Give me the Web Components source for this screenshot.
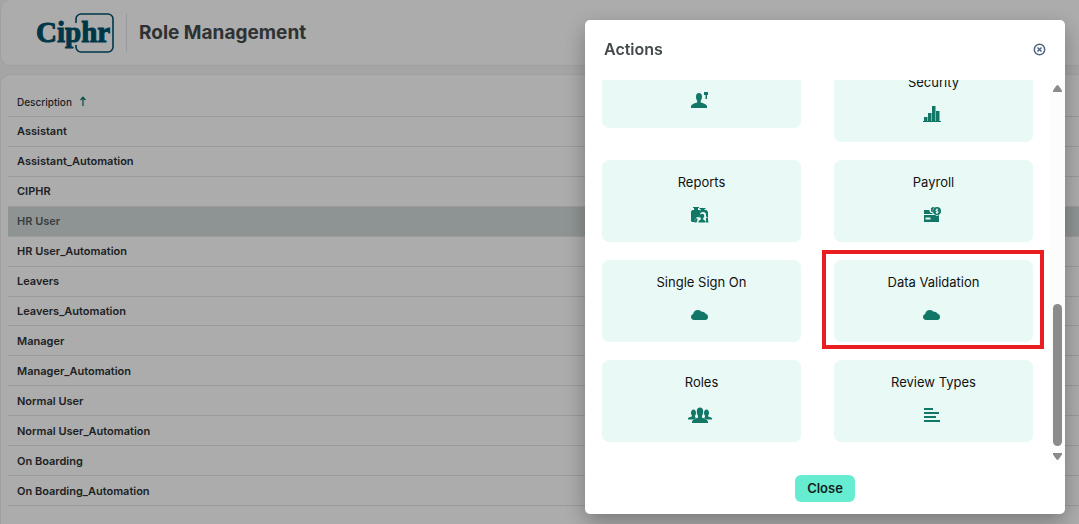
<!DOCTYPE html>
<html lang="en">
<head>
<meta charset="utf-8">
<title>Role Management</title>
<style>
  html, body { height: 100%; }
  body { margin: 0; overflow: hidden; background: #f4f4f4; font-family: Inter, "Open Sans", sans-serif; color: #222; }
</style>
</head>
<body>
<role-app></role-app>
<script>
const define = (name, html, setup) => {
  const template = document.createElement('template');
  template.innerHTML = html;
  customElements.define(name, class extends HTMLElement {
    constructor() {
      super();
      this.attachShadow({ mode: 'open' }).append(template.content.cloneNode(true));
    }
    connectedCallback() { if (setup) setup(this, this.shadowRoot); }
  });
};

const glyphs = {
  help: '<path d="M11 2c2 0 3 1.500 3 3.500 0 2-.6 3.500-1.300 4.300v1.700c2.500.8 6.300 1.600 6.300 4V17H3v-1.500c0-2.400 3.700-3.200 6.200-4V9.800C8.500 9 8 7.500 8 5.500 8 3.500 9 2 11 2zM16 1h4v3h-1v4h-1.500V4H16z"/>',
  bars: '<path d="M3 16h18v1H3zM4 12h3.500v5H4zM8 8h3.500v9H8zM12 1h3.500v16H12zM16 6h3.500v11H16z"/>',
  reports: '<g transform="translate(0 1)"><path d="M5 1h6v1h-1v2h1.500l1 1V3h-1V2h6v1h-1v1h2l1.500 2v6l-2-1.500V9a3 3 0 0 0-6 0l-.3 2.500-2.700-.5-2.300 3L7 16H4l-1-1V5.500L4.500 4H6V2H5z"/><circle cx="14" cy="10" r="2.300"/><path d="M12.800 12h2.400v1.500l2.300 1.500v1.500h-7V15l2.300-1.500zM7.500 12.500h2V14l-1 2.500h-2zM18 12h2v2l.5 2.500H18z"/></g>',
  payroll: '<g transform="translate(0 1)"><path d="M4 4h5.500v1.500L11 7h1.500v1H4zM11 2.200A3.500 3.500 0 0 1 14.500 1 5 5 0 0 0 13 6.500l-2-1zM4 9h11l2 1 2-1v7H4zM5.500 11.500v2h5v-2z" fill-rule="evenodd"/><path d="M17 1a4 4 0 1 1 0 8 4 4 0 0 1 0-8zm-.5 1.500v.7c-1.500.4-1.300 2.100.2 2.400.8.200.7.700-.9.400v1l.7.200v.7h1v-.8c1.500-.4 1.200-2-.2-2.400-.7-.2-.5-.7.900-.3v-1l-.7-.2v-.7z" fill-rule="evenodd"/></g>',
  cloud: '<path d="M6 15c-1.800 0-3-1.200-3-2.900 0-1.600 1-2.800 2.200-3.100C5.500 6.600 7.500 5 9.800 5c1.700 0 3 .7 3.800 1.800 1.900-.5 3.300.4 3.700 1.800 1.600.3 2.700 1.600 2.700 3.300 0 1.800-1.200 3.100-2.900 3.100z"/>',
  people: '<g transform="translate(0 2)"><path d="M5.500 2.500C7 2.500 8 3.800 8 5.700 8 7 7.500 8 7 8.600v1.700l1.500.7-3.200 1.500H0v-1c0-1 2.300-1.200 4-2.200V8.600C3.500 8 3 7 3 5.700c0-1.900 1-3.200 2.500-3.200zM18.500 2.500C17 2.500 16 3.800 16 5.700 16 7 16.500 8 17 8.600v1.700l-1.500.7 3.200 1.500H24v-1c0-1-2.300-1.200-4-2.200V8.600c.5-.6 1-1.600 1-2.900 0-1.900-1-3.200-2.500-3.200z"/><path d="M12 .5c2 0 3.200 1.500 3.200 3.900 0 1.900-.5 3.300-1.200 4.300v1.800c2 1 6 2 6 4.500v1H4v-1c0-2.500 4-3.500 6-4.500V8.700C9.300 7.700 8.800 6.300 8.800 4.400 8.800 2 10 .5 12 .5z"/></g>',
  lines: '<path d="M4 3h9v2H4zM4 7h15v2H4zM4 11h12v2H4zM4 15h16v2H4z"/>'
};

define('ciphr-logo', `
<style>
  :host { display: block; width: 80px; height: 44px; color: #00526b; }
  svg { display: block; }
  text { font: 700 29px "Liberation Serif", serif; fill: currentColor; stroke: currentColor; stroke-width: 1; }
</style>
<svg width="80" height="44" viewBox="0 0 80 44" role="img" aria-label="Ciphr">
  <path d="M40 12V8a5 5 0 0 1 5-5h27a5 5 0 0 1 5 5v28a5 5 0 0 1-5 5H45a5 5 0 0 1-5-5v-2" fill="none" stroke="currentColor" stroke-width="1.600"/>
  <text x="0" y="31">Ciphr</text>
</svg>`);

define('app-header', `
<style>
  :host { display: flex; align-items: center; box-sizing: border-box; height: 66px; padding-left: 35px; background: #fefefe; border: 1px solid #eaeaea; border-width: 0 0 1px 1px; border-radius: 10px 0 0 10px; }
  h1 { margin: 0 0 0 10px; padding-left: 12px; border-left: 1px solid #e4e4e4; font-size: 19px; line-height: 39px; font-weight: 700; color: #444a4c; }
</style>
<ciphr-logo></ciphr-logo>
<h1><slot></slot></h1>`);

define('role-table', `
<style>
  :host { display: block; box-sizing: border-box; flex: 1; margin-top: 8px; padding: 13px 0 0 7px; background: #fefefe; border: 1px solid #eaeaea; border-width: 1px 0 0 1px; border-radius: 10px 0 0 0; }
  table { width: 100%; height: 418px; border-collapse: collapse; text-align: left; }
  th, td { height: 28px; padding: 0 9px; border-bottom: 1px solid #e4e4e4; font-size: 11px; line-height: 16px; font-weight: 600; color: #2d3235; }
  th { font-size: 10px; font-weight: 500; }
  th svg { margin-left: 4px; }
  .selected td { background: #d2dbd9; color: #555b5d; }
</style>
<table>
  <thead><tr><th scope="col" aria-sort="ascending">Description <svg width="8" height="10" viewBox="0 0 8 10" aria-hidden="true"><path d="M4 10V2M1.500 4L4 1.300 6.500 4" fill="none" stroke="#167565" stroke-width="1.300"/></svg></th></tr></thead>
  <tbody></tbody>
</table>`, (host, root) => {
  const names = ['Assistant', 'Assistant_Automation', 'CIPHR', 'HR User', 'HR User_Automation', 'Leavers', 'Leavers_Automation', 'Manager', 'Manager_Automation', 'Normal User', 'Normal User_Automation', 'On Boarding', 'On Boarding_Automation'];
  root.querySelector('tbody').innerHTML = names.map(n => `<tr${n === host.getAttribute('selected') ? ' class="selected" aria-selected="true"' : ''}><td>${n}</td></tr>`).join('');
});

define('action-tile', `
<style>
  :host { display: block; position: relative; }
  button { display: flex; flex-direction: column; align-items: center; gap: 14px; box-sizing: border-box; width: 100%; padding: 13px 0 19px; border: 0; border-radius: 7px; background: #e8f9f6; font: 400 13px/18px Inter, sans-serif; color: #111; }
  :host([tall]) button { padding-top: 27px; }
  span { min-height: 18px; }
  svg { display: block; margin-right: 4px; fill: #127767; }
  :host([marked])::after { content: ""; position: absolute; inset: -10px -11px -7px -12px; border: 4px solid #e81e20; pointer-events: none; }
</style>
<button type="button"><span><slot></slot></span><svg width="24" height="18" viewBox="0 0 24 18" aria-hidden="true"></svg></button>`,
(host, root) => { root.querySelector('svg').innerHTML = glyphs[host.getAttribute('icon')]; });

define('scroll-bar', `
<style>
  :host { display: flex; flex-direction: column; align-items: center; box-sizing: border-box; width: 15px; padding: 5px 0 4px; background: #fcfcfc; }
  i { margin-top: auto; margin-bottom: 6px; width: 9px; height: 142px; border-radius: 5px; background: #8b8b8b; }
  svg { fill: #8b8b8b; }
</style>
<svg width="9" height="8" viewBox="0 0 9 8"><path d="M3.700.2h1.600L9 5.500V7H0V5.500z"/></svg>
<i></i>
<svg width="9" height="8" viewBox="0 0 9 8"><path d="M3.700 7.800h1.600L9 2.500V1H0v1.500z"/></svg>`);

define('actions-dialog', `
<style>
  :host { position: fixed; inset: 0; display: flex; justify-content: flex-end; align-items: flex-start; box-sizing: border-box; padding: 20px 14px 10px; background: rgba(0, 0, 0, .32); }
  section { width: 480px; border-radius: 5px; background: #fff; box-shadow: 0 8px 22px rgba(0, 0, 0, .3); }
  header { display: flex; justify-content: space-between; align-items: center; box-sizing: border-box; height: 60px; padding: 0 19px 2px; }
  h2 { margin: 0; font-size: 16px; line-height: 20px; font-weight: 600; color: #444a4c; }
  button { border: 0; padding: 0; }
  .dismiss { background: none; }
  .dismiss svg { display: block; fill: none; stroke: #536480; stroke-width: 1.500; }
  .body { display: flex; height: 384px; }
  .view { flex: 1; display: flex; flex-direction: column; justify-content: flex-end; overflow: hidden; }
  .grid { display: grid; grid-template-columns: 1fr 1fr; gap: 18px 33px; align-items: start; padding: 0 17px 22px; }
  footer { display: flex; justify-content: center; padding: 11px 0 12px; }
  .close { padding: 0 12px; border-radius: 6px; background: #66edd1; font: 600 13px/27px Inter, sans-serif; color: #12211f; }
</style>
<section role="dialog" aria-labelledby="title">
  <header>
    <h2 id="title">Actions</h2>
    <button class="dismiss" type="button" aria-label="Close"><svg width="13" height="13" viewBox="0 0 13 13"><circle cx="6.500" cy="6.500" r="5.200"/><path d="M4.500 4.500l4 4M8.500 4.500l-4 4"/></svg></button>
  </header>
  <div class="body">
    <div class="view"><div class="grid">
      <action-tile icon="help"></action-tile>
      <action-tile icon="bars" tall>Security</action-tile>
      <action-tile icon="reports">Reports</action-tile>
      <action-tile icon="payroll">Payroll</action-tile>
      <action-tile icon="cloud">Single Sign On</action-tile>
      <action-tile icon="cloud" marked>Data Validation</action-tile>
      <action-tile icon="people">Roles</action-tile>
      <action-tile icon="lines">Review Types</action-tile>
    </div></div>
    <scroll-bar></scroll-bar>
  </div>
  <footer><button class="close" type="button">Close</button></footer>
</section>`);

define('role-app', `
<style>:host { display: flex; flex-direction: column; min-height: 100%; }</style>
<app-header>Role Management</app-header>
<role-table selected="HR User"></role-table>
<actions-dialog></actions-dialog>`);
</script>
</body>
</html>
